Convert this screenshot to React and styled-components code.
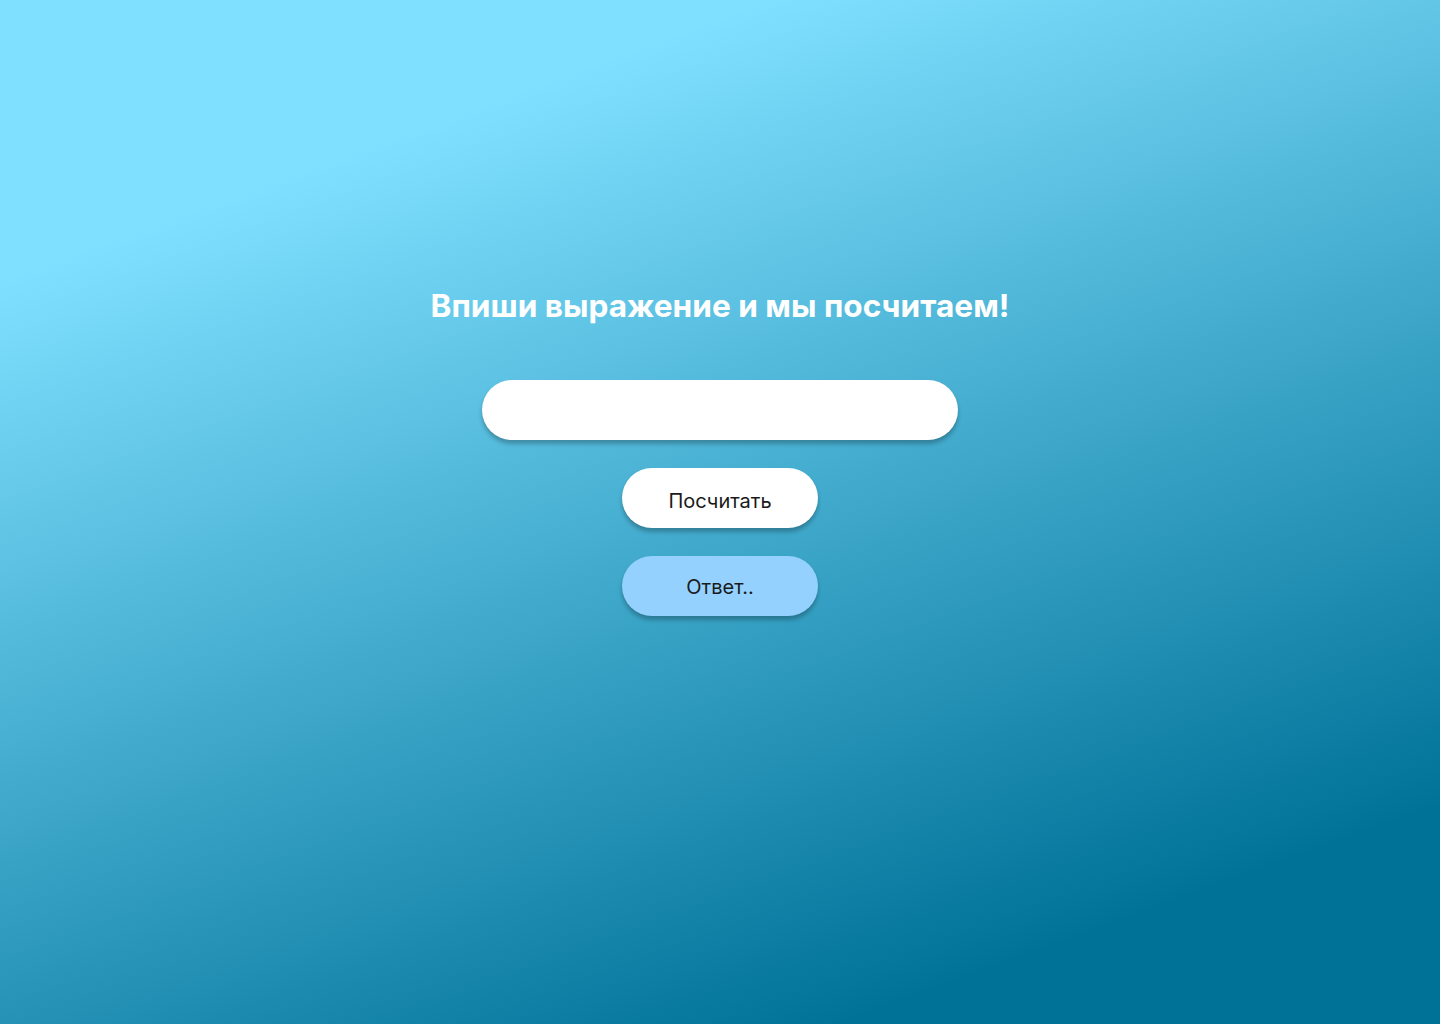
import React, { useState } from 'react';
import styled, { createGlobalStyle } from 'styled-components';

const GlobalStyle = createGlobalStyle`
  * {
    box-sizing: border-box;
  }
  html, body {
    margin: 0;
    padding: 0;
  }
  body {
    font-family: Inter, "Noto Sans", sans-serif;
  }
`;

const Page = styled.div`
  min-height: 100vh;
  background: linear-gradient(160deg, #80e0ff 18%, #007298 86%);
  display: flex;
  flex-flow: column nowrap;
  align-items: center;
  padding-top: 287px;
`;

const Title = styled.h1`
  margin: 0 0 55px;
  font-size: 31.6px;
  line-height: 38px;
  font-weight: 700;
  color: #ffffff;
  text-align: center;
`;

const ExpressionInput = styled.input`
  width: 476px;
  height: 60px;
  border: none;
  border-radius: 30px;
  background: #ffffff;
  box-shadow: 0 4px 4px rgba(0, 0, 0, 0.25);
  padding: 0 28px;
  font-family: inherit;
  font-size: 20px;
  color: #1a1a1a;
  outline: none;
  margin-bottom: 28px;
`;

const PillButton = styled.button`
  width: 196px;
  height: 60px;
  border: none;
  border-radius: 30px;
  background: #ffffff;
  box-shadow: 0 4px 4px rgba(0, 0, 0, 0.25);
  padding: 5px 0 0;
  font-family: inherit;
  font-size: 20px;
  font-weight: 400;
  color: #1a1a1a;
  cursor: pointer;
  margin-bottom: 28px;
`;

const AnswerPill = styled.div`
  width: 196px;
  height: 60px;
  border-radius: 30px;
  background: #94d1ff;
  box-shadow: 0 4px 4px rgba(0, 0, 0, 0.25);
  padding-top: 2px;
  display: flex;
  align-items: center;
  justify-content: center;
  font-size: 20px;
  color: #1a1a1a;
`;

export default function App() {
  const [expr, setExpr] = useState('');
  const [answer, setAnswer] = useState('Ответ..');

  const calc = () => {
    try {
      if (!/^[\d\s+\-*/().]+$/.test(expr)) return;
      // eslint-disable-next-line no-new-func
      setAnswer(String(Function(`return (${expr})`)()));
    } catch (e) {
      setAnswer('Ошибка');
    }
  };

  return (
    <Page>
      <GlobalStyle />
      <Title>Впиши выражение и мы посчитаем!</Title>
      <ExpressionInput value={expr} onChange={e => setExpr(e.target.value)} />
      <PillButton onClick={calc}>Посчитать</PillButton>
      <AnswerPill>{answer}</AnswerPill>
    </Page>
  );
}
